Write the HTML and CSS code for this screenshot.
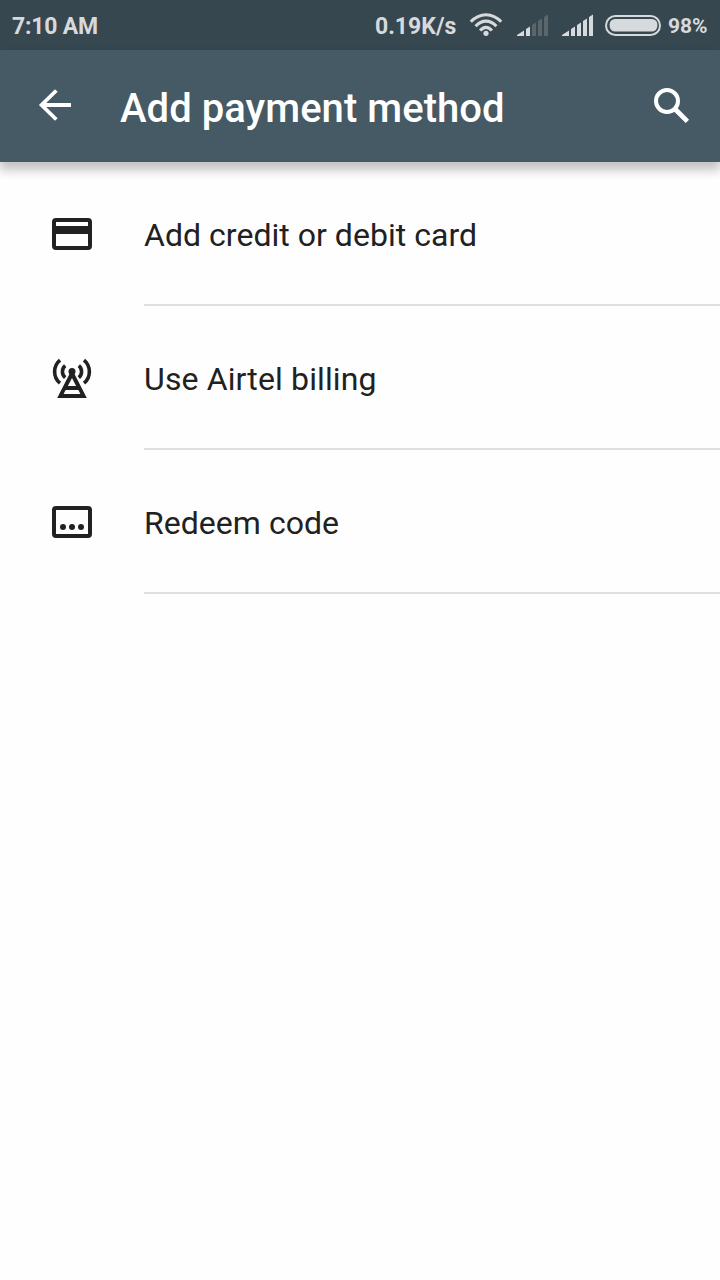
FILE: index.html
```
<!DOCTYPE html>
<html lang="en">
<head>
<meta charset="utf-8">
<title>Add payment method</title>
<link rel="stylesheet" href="styles.css">
</head>
<body>
<div class="status-bar">
  <span class="clock">7:10 AM</span>
  <span class="speed">0.19K/s</span>
  <svg class="wifi" width="34" height="26" viewBox="0 0 34 26">
    <g fill="none" stroke="currentColor" stroke-width="3.1">
      <path d="M1.8 9.8Q8.5 2.7 17 2.7T32.2 9.8"/>
      <path d="M6.6 14.2Q11.2 9.1 17 9.1T27.4 14.2"/>
      <path d="M11.2 18.6Q13.7 15.4 17 15.4T22.8 18.6"/>
    </g>
    <circle cx="17" cy="21.3" r="2.6" fill="currentColor"/>
  </svg>
  <svg class="signal signal-weak" width="32" height="22" viewBox="0 0 32 22" fill="currentColor">
    <path d="M0 22v-1L7 16.5V22zM9 22v-7l4-2.5V22z"/>
    <path class="bar-off" d="M15 22V11l4-2.5V22zM21 22V7l4-2.5V22zM27 22V3l4-2.5V22z"/>
  </svg>
  <svg class="signal" width="32" height="22" viewBox="0 0 32 22" fill="currentColor">
    <path d="M0 22v-1L7 16.5V22zM9 22v-7l4-2.5V22zM15 22V11l4-2.5V22zM21 22V7l4-2.5V22zM27 22V3l4-2.5V22z"/>
  </svg>
  <svg class="battery" width="56" height="21" viewBox="0 0 56 21">
    <rect x="1" y="1" width="54" height="19" rx="9.5" fill="none" stroke="currentColor" stroke-width="2"/>
    <rect x="4.6" y="4" width="47.8" height="12.6" rx="5.5" fill="currentColor"/>
  </svg>
  <span class="percent">98%</span>
</div>
<header class="app-bar">
  <svg class="back" width="34" height="34" viewBox="0 0 34 34" fill="none" stroke="currentColor" stroke-width="3.8">
    <path d="M33 17H4M18.3 2.5L3.6 17l14.7 14.5"/>
  </svg>
  <h1 class="title">Add payment method</h1>
  <svg class="search" width="36" height="36" viewBox="0 0 36 36" fill="none" stroke="currentColor">
    <circle cx="13" cy="13" r="11" stroke-width="4"/>
    <path d="M21.5 21.5L33.4 33.4" stroke-width="4.8"/>
  </svg>
</header>
<main class="methods">
  <div class="method">
    <svg class="icon" width="40" height="40" viewBox="0 0 40 40">
      <path fill="currentColor" fill-rule="evenodd" d="M4 4H36Q40 4 40 8V32Q40 36 36 36H4Q0 36 0 32V8Q0 4 4 4ZM4 8V12H36V8ZM4 20V32H36V20Z"/>
    </svg>
    <div class="label">Add credit or debit card</div>
  </div>
  <div class="method">
    <svg class="icon" width="40" height="40" viewBox="0 0 40 40">
      <g fill="none" stroke="currentColor" stroke-width="3.6">
        <path d="M8 2.2A15 15 0 0 0 8 25.2M32 2.2A15 15 0 0 1 32 25.2"/>
        <path d="M13.2 7.7A7.8 7.8 0 0 0 13.2 19.6M26.8 7.7A7.8 7.8 0 0 1 26.8 19.6"/>
      </g>
      <circle cx="20" cy="13.5" r="3.5" fill="currentColor"/>
      <path fill="currentColor" fill-rule="evenodd" d="M18.5 14H21.5L34.8 40H5.2ZM20 20L15.9 28H24.1ZM13.6 32L11.6 36H28.4L26.4 32Z"/>
    </svg>
    <div class="label label-airtel">Use Airtel billing</div>
  </div>
  <div class="method">
    <svg class="icon" width="40" height="40" viewBox="0 0 40 40">
      <rect x="2" y="6" width="36" height="28" rx="2" fill="none" stroke="currentColor" stroke-width="4"/>
      <g fill="currentColor"><circle cx="11" cy="25" r="3"/><circle cx="20" cy="25" r="3"/><circle cx="29" cy="25" r="3"/></g>
    </svg>
    <div class="label">Redeem code</div>
  </div>
</main>
</body>
</html>
```
FILE: styles.css
```
body {
  margin: 0;
  min-height: 1280px;
  background: #fefefe;
  color: #212121;
  font-family: Roboto, sans-serif;
}
svg { display: block; flex: none; }
.status-bar {
  display: flex;
  align-items: center;
  box-sizing: border-box;
  height: 50px;
  padding: 2px 0 0 12px;
  background: #37474f;
  color: #d7dadc;
  font-size: 23px;
  font-weight: 700;
  line-height: 48px;
  white-space: nowrap;
}
.clock { width: 363px; margin-top: 2px; letter-spacing: -.2px; }
.speed { width: 94px; margin-top: 2px; }
.wifi { width: 34px; margin-top: -3px; }
.signal { margin: -2px 0 0 13px; }
.signal-weak { margin-left: 14px; }
.bar-off { opacity: .22; }
.battery { margin: -2px 7px 0 11px; }
.percent { font-size: 21px; }
.app-bar {
  display: flex;
  align-items: center;
  box-sizing: border-box;
  height: 112px;
  padding: 0 30px 0 38px;
  background: #455a64;
  color: #fff;
  box-shadow: 0 7px 10px 1px rgba(0, 0, 0, .24);
}
.back { margin-bottom: 2px; }
.title {
  flex: 1;
  margin: 6px 0 0 48px;
  font-size: 40px;
  font-weight: 500;
  line-height: 48px;
  letter-spacing: .05px;
}
.method {
  display: flex;
  height: 144px;
  padding-left: 52px;
}
.icon { margin-top: 52px; }
.label {
  flex: 1;
  box-sizing: border-box;
  margin-left: 52px;
  padding-top: 54px;
  border-bottom: 2px solid #dfdfdf;
  font-size: 32px;
  line-height: 38px;
  letter-spacing: .03px;
}
.label-airtel { letter-spacing: .13px; }
```
